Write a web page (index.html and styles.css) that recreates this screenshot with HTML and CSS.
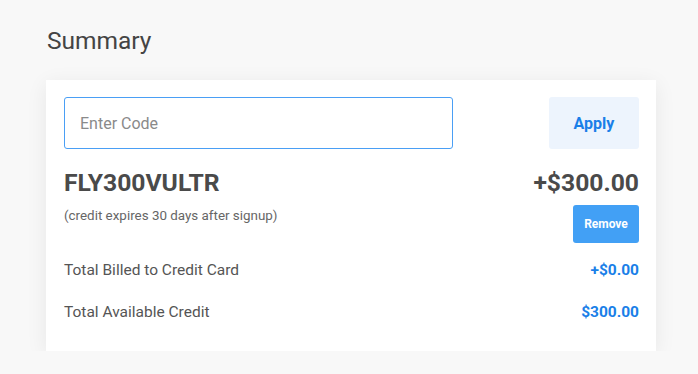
FILE: index.html
```html
<!DOCTYPE html>
<html lang="en">
<head>
    <meta charset="UTF-8">
    <title>Summary</title>
    <link rel="stylesheet" href="styles.css">
</head>
<body>
<div class="page">
    <h2>Summary</h2>
    <div class="card">
        <div class="code-row">
            <input type="text" class="code-input" placeholder="Enter Code">
            <button class="apply">Apply</button>
        </div>

        <div class="promo">
            <div class="promo-left">
                <div class="promo-code">FLY300VULTR</div>
                <div class="promo-note">(credit expires 30 days after signup)</div>
            </div>
            <div class="promo-right">
                <div class="promo-amount">+$300.00</div>
                <button class="remove">Remove</button>
            </div>
        </div>

        <div class="totals">
            <div class="total-row">
                <span>Total Billed to Credit Card</span>
                <span class="total-value">+$0.00</span>
            </div>
            <div class="total-row">
                <span>Total Available Credit</span>
                <span class="total-value">$300.00</span>
            </div>
        </div>
    </div>
</div>
</body>
</html>
```

FILE: styles.css
```css
body {
    margin: 0;
    font-family: Roboto, "Liberation Sans", Arial, sans-serif;
    background: #f8f8f8;
}
.page {
    padding: 26px 42px 0 46px;
}
h2 {
    margin: 0 0 24px 1px;
    font-size: 24.5px;
    font-weight: 400;
    line-height: 30px;
    color: #444;
}
.card {
    background: white;
    padding: 17px 17px 18px 18px;
    box-shadow: 0 4px 20px rgba(0,0,0,0.07);
}
.code-row {
    display: flex;
    justify-content: space-between;
}
.code-input {
    width: 389px;
    height: 52px;
    box-sizing: border-box;
    padding: 0 15px;
    border: 1px solid #4a9ff5;
    border-radius: 3px;
    font-family: inherit;
    font-size: 16px;
    color: #333;
    outline: none;
}
.code-input::placeholder {
    color: #8a8a8a;
}
.apply {
    width: 90px;
    height: 52px;
    border: none;
    border-radius: 3px;
    background: #edf4fd;
    color: #1a7fe8;
    font-family: inherit;
    font-size: 16px;
    font-weight: 700;
    cursor: pointer;
}
.promo {
    display: flex;
    justify-content: space-between;
    margin-top: 19px;
}
.promo-code, .promo-amount {
    font-size: 24.7px;
    font-weight: 700;
    line-height: 30px;
    color: #4a4a4a;
}
.promo-note {
    margin-top: 10px;
    font-size: 13.4px;
    color: #666;
}
.promo-right {
    display: flex;
    flex-direction: column;
    align-items: flex-end;
}
.remove {
    margin-top: 7px;
    width: 66px;
    height: 38px;
    border: none;
    border-radius: 3px;
    background: #42a0f5;
    color: white;
    font-family: inherit;
    font-size: 12px;
    font-weight: 700;
    cursor: pointer;
}
.totals {
    margin-top: 6px;
}
.total-row {
    display: flex;
    justify-content: space-between;
    align-items: center;
    height: 42px;
    font-size: 15.5px;
    color: #555;
}
.total-value {
    font-weight: 700;
    color: #1a7fe8;
}
```
